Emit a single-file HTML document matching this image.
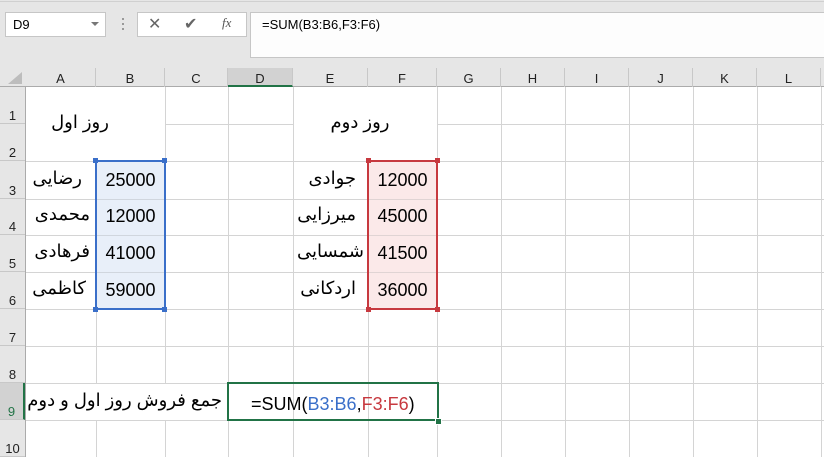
<!DOCTYPE html>
<html style="overflow:hidden"><head><meta charset="utf-8"><style>
html,body{margin:0;width:824px;height:457px;overflow:hidden}
body{background:#fff;font-family:"Liberation Sans","DejaVu Sans",sans-serif;position:relative}
.a{position:absolute}
.vl{position:absolute;top:87px;height:370px;width:1px;background:#d4d4d4}
.hl{position:absolute;left:26px;width:798px;height:1px;background:#d4d4d4}
.ch{position:absolute;top:68px;height:19px;font-size:13px;color:#222;text-align:center;line-height:21px;border-right:1px solid #c8c8c8;box-sizing:border-box}
.rh{position:absolute;left:0;width:25px;font-size:13px;color:#222;text-align:center;box-sizing:border-box;border-bottom:1px solid #c8c8c8}
.t{position:absolute;font-size:18px;color:#000;font-family:"Liberation Sans","DejaVu Sans",sans-serif;white-space:nowrap;line-height:20px}
.n{position:absolute;font-size:18px;color:#000;width:69px;text-align:center;line-height:20px}
</style></head><body>
<div class="a" style="left:0;top:0;width:824px;height:68px;background:#e6e6e6"></div>
<div class="a" style="left:0;top:1px;width:824px;height:1px;background:#d0d0d0"></div>
<div class="a" style="left:5px;top:12px;width:101px;height:25px;background:#fff;border:1px solid #c6c6c6;box-sizing:border-box;font-size:13px;line-height:24px;padding-left:7px">D9</div>
<div class="a" style="left:91px;top:22px;width:0;height:0;border-left:4px solid transparent;border-right:4px solid transparent;border-top:4px solid #777"></div>
<div class="a" style="left:122px;top:18px;width:2px;height:14px;background:repeating-linear-gradient(#999 0 2px,transparent 2px 5px)"></div>
<div class="a" style="left:137px;top:12px;width:110px;height:25px;background:#fff;border:1px solid #c6c6c6;box-sizing:border-box"></div>
<div class="a" style="left:148px;top:14px;font-size:16px;color:#666">✕</div>
<div class="a" style="left:184px;top:14px;font-size:16px;color:#666">✔</div>
<div class="a" style="left:222px;top:15px;font-size:13px;color:#555;font-style:italic;font-family:'Liberation Serif',serif">fx</div>
<div class="a" style="left:250px;top:12px;width:574px;height:46px;background:#fdfdfd;border:1px solid #c6c6c6;box-sizing:border-box;border-right:none;font-size:13px;line-height:24px;padding-left:11px;color:#000">=SUM(B3:B6,F3:F6)</div>
<div class="a" style="left:0;top:68px;width:824px;height:19px;background:#e6e6e6;border-bottom:1px solid #ababab;box-sizing:border-box"></div>
<div class="a" style="left:8px;top:72px;width:0;height:0;border-left:14px solid transparent;border-bottom:12px solid #bdbdbd"></div>
<div class="a" style="left:0;top:87px;width:26px;height:370px;background:#e6e6e6;border-right:1px solid #ababab;box-sizing:border-box"></div>
<div class="ch" style="left:26px;width:70px">A</div>
<div class="ch" style="left:96px;width:69px">B</div>
<div class="ch" style="left:165px;width:63px">C</div>
<div class="ch" style="left:228px;width:65px;background:#d2d2d2;border-bottom:2px solid #217346">D</div>
<div class="ch" style="left:293px;width:75px">E</div>
<div class="ch" style="left:368px;width:69px">F</div>
<div class="ch" style="left:437px;width:64px">G</div>
<div class="ch" style="left:501px;width:64px">H</div>
<div class="ch" style="left:565px;width:64px">I</div>
<div class="ch" style="left:629px;width:64px">J</div>
<div class="ch" style="left:693px;width:64px">K</div>
<div class="ch" style="left:757px;width:64px">L</div>
<div class="rh" style="top:87px;height:37px;line-height:57px">1</div>
<div class="rh" style="top:124px;height:37px;line-height:57px">2</div>
<div class="rh" style="top:161px;height:38px;line-height:59px">3</div>
<div class="rh" style="top:199px;height:36px;line-height:55px">4</div>
<div class="rh" style="top:235px;height:37px;line-height:57px">5</div>
<div class="rh" style="top:272px;height:37px;line-height:57px">6</div>
<div class="rh" style="top:309px;height:37px;line-height:57px">7</div>
<div class="rh" style="top:346px;height:37px;line-height:57px">8</div>
<div class="rh" style="top:383px;height:37px;line-height:57px;background:#d2d2d2;color:#217346;border-right:2px solid #217346">9</div>
<div class="rh" style="top:420px;height:37px;line-height:57px">10</div>
<div class="vl" style="left:96px;top:161px;height:296px"></div>
<div class="vl" style="left:165px"></div>
<div class="vl" style="left:228px"></div>
<div class="vl" style="left:293px"></div>
<div class="vl" style="left:368px;top:161px;height:296px"></div>
<div class="vl" style="left:437px"></div>
<div class="vl" style="left:501px"></div>
<div class="vl" style="left:565px"></div>
<div class="vl" style="left:629px"></div>
<div class="vl" style="left:693px"></div>
<div class="vl" style="left:757px"></div>
<div class="vl" style="left:821px"></div>
<div class="hl" style="top:124px;left:165px;width:128px"></div>
<div class="hl" style="top:124px;left:437px;width:387px"></div>
<div class="hl" style="top:161px"></div><div class="hl" style="top:199px"></div>
<div class="hl" style="top:235px"></div><div class="hl" style="top:272px"></div>
<div class="hl" style="top:309px"></div><div class="hl" style="top:346px"></div>
<div class="hl" style="top:383px"></div><div class="hl" style="top:420px"></div>
<div class="a" style="left:27px;top:384px;width:200px;height:36px;background:#fff"></div>
<div class="a" style="left:97px;top:161px;width:67px;height:148px;background:#e8eff9"></div>
<div class="a" style="left:369px;top:161px;width:67px;height:148px;background:#fbe9e9"></div>
<div class="hl" style="top:199px;left:97px;width:67px;background:#d0d6de"></div><div class="hl" style="top:235px;left:97px;width:67px;background:#d0d6de"></div><div class="hl" style="top:272px;left:97px;width:67px;background:#d0d6de"></div>
<div class="hl" style="top:199px;left:369px;width:67px;background:#e0d4d4"></div><div class="hl" style="top:235px;left:369px;width:67px;background:#e0d4d4"></div><div class="hl" style="top:272px;left:369px;width:67px;background:#e0d4d4"></div>
<div class="a" style="left:95px;top:160px;width:71px;height:150px;border:2px solid #3a6fc9;box-sizing:border-box"></div>
<div class="a" style="left:367px;top:160px;width:71px;height:150px;border:2px solid #c7393f;box-sizing:border-box"></div>
<div class="a" style="left:93px;top:158px;width:5px;height:5px;background:#3a6fc9"></div><div class="a" style="left:162px;top:158px;width:5px;height:5px;background:#3a6fc9"></div>
<div class="a" style="left:93px;top:307px;width:5px;height:5px;background:#3a6fc9"></div><div class="a" style="left:162px;top:307px;width:5px;height:5px;background:#3a6fc9"></div>
<div class="a" style="left:366px;top:158px;width:5px;height:5px;background:#c7393f"></div><div class="a" style="left:435px;top:158px;width:5px;height:5px;background:#c7393f"></div>
<div class="a" style="left:366px;top:307px;width:5px;height:5px;background:#c7393f"></div><div class="a" style="left:435px;top:307px;width:5px;height:5px;background:#c7393f"></div>
<div class="a" style="left:227px;top:382px;width:212px;height:39px;border:2px solid #217346;box-sizing:border-box"></div>
<div class="a" style="left:435px;top:418px;width:5px;height:5px;background:#217346;border:1px solid #fff"></div>
<div class="t" dir="rtl" style="left:40px;width:80px;top:112px;text-align:center">روز اول</div>
<div class="t" dir="rtl" style="left:320px;width:80px;top:112px;text-align:center">روز دوم</div>
<div class="t" dir="rtl" style="right:742px;top:168px">رضایی</div>
<div class="t" dir="rtl" style="right:734px;top:204px">محمدی</div>
<div class="t" dir="rtl" style="right:734px;top:241px">فرهادی</div>
<div class="t" dir="rtl" style="right:738px;top:278px">کاظمی</div>
<div class="t" dir="rtl" style="right:468px;top:168px">جوادی</div>
<div class="t" dir="rtl" style="right:468px;top:204px">میرزایی</div>
<div class="t" dir="rtl" style="right:460px;top:241px">شمسایی</div>
<div class="t" dir="rtl" style="right:468px;top:278px">اردکانی</div>
<div class="n" style="left:96px;top:170px">25000</div>
<div class="n" style="left:96px;top:206px">12000</div>
<div class="n" style="left:96px;top:243px">41000</div>
<div class="n" style="left:96px;top:280px">59000</div>
<div class="n" style="left:368px;top:170px">12000</div>
<div class="n" style="left:368px;top:206px">45000</div>
<div class="n" style="left:368px;top:243px">41500</div>
<div class="n" style="left:368px;top:280px">36000</div>
<div class="t" dir="rtl" style="right:602px;top:390px">جمع فروش روز اول و دوم</div>
<div class="a" style="left:251px;top:394px;font-size:18px;line-height:20px;white-space:nowrap">=SUM(<span style="color:#3a6fc9">B3:B6</span>,<span style="color:#c7393f">F3:F6</span>)</div>
</body></html>
